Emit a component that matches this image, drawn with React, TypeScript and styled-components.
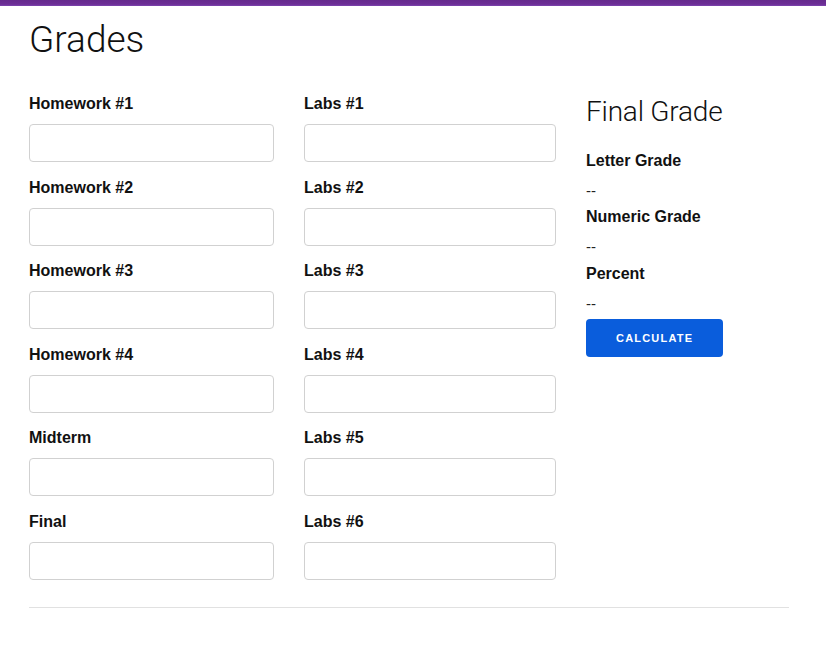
import styled, { createGlobalStyle } from 'styled-components'

const GlobalStyle = createGlobalStyle`
  html, body {
    margin: 0;
    padding: 0;
    background: #fff;
  }
  body {
    font-family: "Liberation Sans", Arial, Helvetica, sans-serif;
    font-size: 15px;
    line-height: 24px;
    color: #222;
  }
  * {
    box-sizing: border-box;
  }
`

const TopBar = styled.div`
  height: 6px;
  background: linear-gradient(to bottom, #652a8c 0%, #6c2e96 70%, #7d44ad 100%);
`

const Container = styled.div`
  width: 789px;
  padding-left: 29px;
`

const Title = styled.h1`
  margin: 12px 0 31px;
  font-family: Roboto, "Liberation Sans", sans-serif;
  font-weight: 300;
  font-size: 37px;
  line-height: 43px;
  letter-spacing: 0;
  color: #111;
`

const Grid = styled.div`
  display: grid;
  grid-template-columns: 245px 252px 1fr;
  column-gap: 30px;
  align-items: start;
`

const Column = styled.div`
  display: flex;
  flex-direction: column;
`

const Field = styled.div`
  display: flex;
  flex-direction: column;
  margin-bottom: 13.6px;
`

const Label = styled.label<{ $gap?: number }>`
  display: block;
  font-weight: 700;
  font-size: 16px;
  line-height: 24px;
  color: #111;
  margin-bottom: ${(p) => p.$gap ?? 8}px;
`

const Input = styled.input`
  height: 38px;
  width: 100%;
  padding: 6px 10px;
  border: 1px solid #d1d1d1;
  border-radius: 4px;
  background: #fff;
  font: inherit;
  outline: none;
`

const Summary = styled.div`
  display: flex;
  flex-direction: column;
  padding-top: 2.5px;
`

const SubTitle = styled.h3`
  margin: 0 0 20px;
  font-family: Roboto, "Liberation Sans", sans-serif;
  font-weight: 300;
  font-size: 28px;
  line-height: 34px;
  letter-spacing: -0.2px;
  color: #111;
`

const Value = styled.div`
  font-size: 15px;
  line-height: 24px;
  color: #222;
  margin-bottom: 2.5px;
`

const Button = styled.button`
  align-self: flex-start;
  margin-top: 0.5px;
  height: 38px;
  padding: 0 30px;
  border: none;
  border-radius: 4px;
  background: #0a5ddc;
  color: #fff;
  font-family: "Liberation Sans", Arial, sans-serif;
  font-size: 11px;
  font-weight: 700;
  line-height: 38px;
  letter-spacing: 1.2px;
  text-transform: uppercase;
  cursor: pointer;
`

const Rule = styled.hr`
  margin: 13px 0 0;
  border: none;
  border-top: 1px solid #e1e1e1;
  width: 760px;
`

const leftFields = ['Homework #1', 'Homework #2', 'Homework #3', 'Homework #4', 'Midterm', 'Final']
const labFields = ['Labs #1', 'Labs #2', 'Labs #3', 'Labs #4', 'Labs #5', 'Labs #6']
const results = ['Letter Grade', 'Numeric Grade', 'Percent']

export default function App() {
  return (
    <>
      <GlobalStyle />
      <TopBar />
      <Container>
        <Title>Grades</Title>
        <Grid>
          <Column>
            {leftFields.map((name) => (
              <Field key={name}>
                <Label>{name}</Label>
                <Input type="text" />
              </Field>
            ))}
          </Column>
          <Column>
            {labFields.map((name) => (
              <Field key={name}>
                <Label>{name}</Label>
                <Input type="text" />
              </Field>
            ))}
          </Column>
          <Summary>
            <SubTitle>Final Grade</SubTitle>
            {results.map((name) => (
              <div key={name}>
                <Label $gap={6}>{name}</Label>
                <Value>--</Value>
              </div>
            ))}
            <Button>Calculate</Button>
          </Summary>
        </Grid>
        <Rule />
      </Container>
    </>
  )
}
